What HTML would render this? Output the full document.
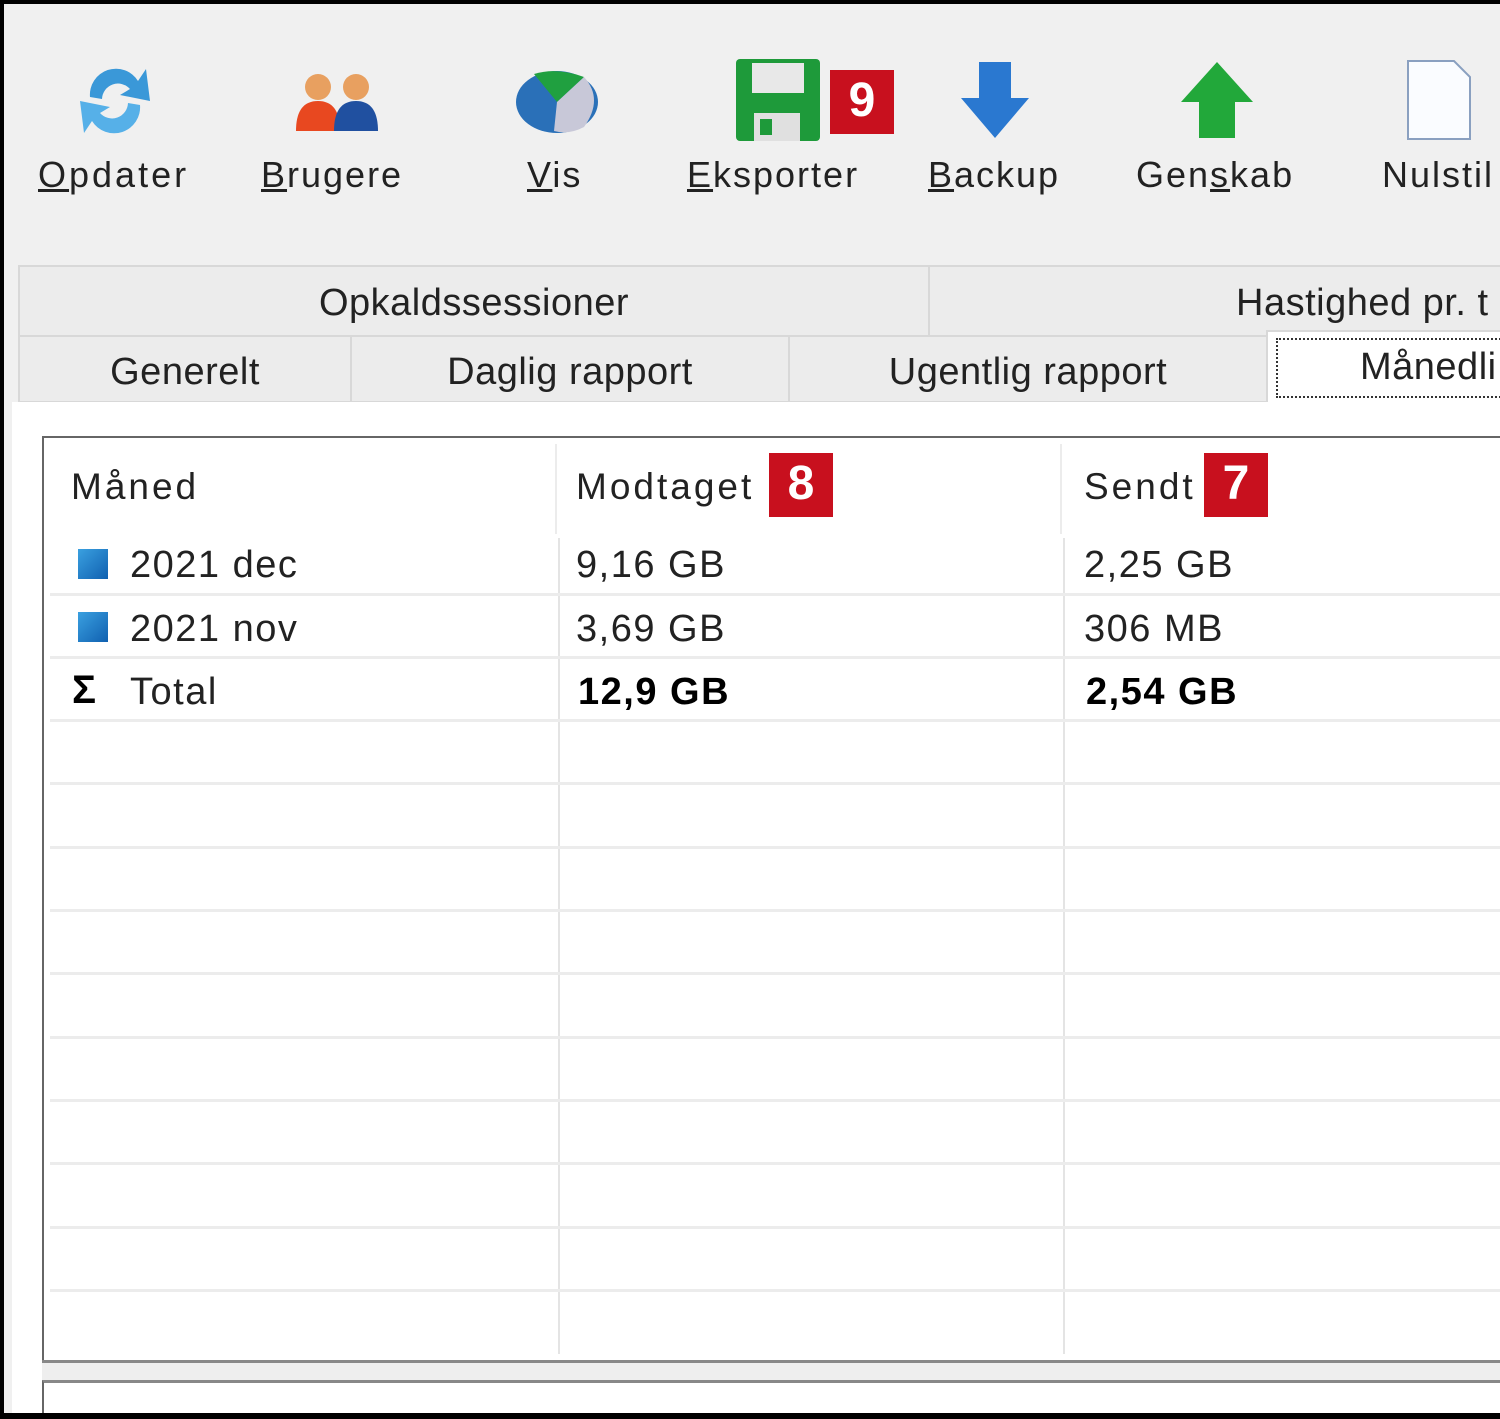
<!DOCTYPE html>
<html><head><style>
*{margin:0;padding:0;box-sizing:border-box}
body{width:1500px;height:1419px;overflow:hidden;background:#000;font-family:"Liberation Sans","DejaVu Sans",sans-serif;position:relative}
#win{position:absolute;left:4px;top:4px;width:1496px;height:1409px;background:#f0f0f0;overflow:hidden}
.lbl{position:absolute;top:150px;font-size:36px;color:#222;letter-spacing:2px}
.ic{position:absolute;top:55px}
.badge{position:absolute;background:#c8101e;color:#fff;font-weight:bold;font-size:48px;text-align:center;line-height:62px}
.tab{position:absolute;background:#ececec;border:2px solid #d8d8d8;font-size:38px;color:#222;text-align:center;letter-spacing:0.5px}
.t{position:absolute;font-size:38px;color:#222;letter-spacing:1.5px}
.h{letter-spacing:3px}
.hl{position:absolute;left:46px;width:1450px;height:3px;background:#ececec}
.vl{position:absolute;width:2px;background:#e4e4e4}
.sq{position:absolute;width:30px;height:30px;background:linear-gradient(135deg,#3aa0e0,#1060b0)}
</style></head><body>
<div id="win">
<svg class="ic" style="left:66px" width="90" height="85" viewBox="0 0 90 85"><path d="M20 38 A26 26 0 0 1 68 22 L76 10 L80 42 L50 36 L60 30 A16 16 0 0 0 32 40Z" fill="#3a98d8"/><path d="M70 46 A26 26 0 0 1 22 62 L14 74 L10 42 L40 48 L30 54 A16 16 0 0 0 58 44Z" fill="#56b0e8"/></svg>
<svg class="ic" style="left:290px;top:65px" width="90" height="65" viewBox="0 0 90 65"><circle cx="24" cy="18" r="13" fill="#e8a060"/><path d="M2 62 Q2 32 24 32 Q46 32 46 62Z" fill="#e84820"/><circle cx="62" cy="18" r="13" fill="#e8a060"/><path d="M40 62 Q40 32 62 32 Q84 32 84 62Z" fill="#2050a0"/></svg>
<svg class="ic" style="left:510px;top:65px" width="86" height="66" viewBox="0 0 86 66"><ellipse cx="43" cy="33" rx="41" ry="31" fill="#2a70b8"/><path d="M43 33 L20 5 Q43 -2 70 8Z" fill="#20a040"/><path d="M43 33 L70 8 Q90 30 70 58 Q55 66 40 62Z" fill="#c8c8d8"/></svg>
<svg class="ic" style="left:732px" width="84" height="82" viewBox="0 0 84 82"><rect x="0" y="0" width="84" height="82" rx="4" fill="#1e9a3a"/><rect x="16" y="4" width="52" height="30" fill="#e8e8e8"/><rect x="18" y="54" width="46" height="28" fill="#e0e0e0"/><rect x="24" y="60" width="12" height="16" fill="#1e9a3a"/></svg>
<div class="badge" style="left:826px;top:66px;width:64px;height:64px">9</div>
<svg class="ic" style="left:955px;top:58px" width="72" height="76" viewBox="0 0 72 76"><path d="M20 0 H52 V36 H70 L36 76 L2 36 H20Z" fill="#2a78d0"/></svg>
<svg class="ic" style="left:1175px;top:58px" width="76" height="76" viewBox="0 0 76 76"><path d="M38 0 L74 40 H56 V76 H20 V40 H2Z" fill="#22a83a"/></svg>
<svg class="ic" style="left:1402px" width="66" height="82" viewBox="0 0 66 82"><path d="M2 2 H48 L64 18 V80 H2Z" fill="#fafcff" stroke="#8aa0c0" stroke-width="2"/></svg>
<div class="lbl" style="left:34px;letter-spacing:3px"><u>O</u>pdater</div>
<div class="lbl" style="left:257px"><u>B</u>rugere</div>
<div class="lbl" style="left:523px"><u>V</u>is</div>
<div class="lbl" style="left:683px"><u>E</u>ksporter</div>
<div class="lbl" style="left:924px"><u>B</u>ackup</div>
<div class="lbl" style="left:1132px">Gen<u>s</u>kab</div>
<div class="lbl" style="left:1378px">Nulstil</div>
<div class="tab" style="left:14px;top:261px;width:912px;height:72px;line-height:72px">Opkaldssessioner</div>
<div class="tab" style="left:924px;top:261px;width:600px;height:72px;line-height:72px;text-align:left;padding-left:306px">Hastighed pr. t</div>
<div class="tab" style="left:14px;top:331px;width:334px;height:68px;line-height:70px">Generelt</div>
<div class="tab" style="left:346px;top:331px;width:440px;height:68px;line-height:70px">Daglig rapport</div>
<div class="tab" style="left:784px;top:331px;width:480px;height:68px;line-height:70px">Ugentlig rapport</div>
<div style="position:absolute;left:1262px;top:326px;width:260px;height:80px;background:#fff;border-left:2px solid #d8d8d8;border-top:2px solid #d8d8d8"></div>
<div style="position:absolute;left:1272px;top:334px;width:240px;height:60px;border:2px dotted #333;font-size:38px;padding-left:82px;line-height:54px;letter-spacing:0.5px;color:#222;white-space:nowrap;overflow:hidden">Månedli</div>
<div style="position:absolute;left:8px;top:398px;width:1500px;height:1020px;background:#fff"></div>
<div style="position:absolute;left:38px;top:432px;width:1470px;height:926px;border:2px solid #666;background:#fff"></div>
<div class="vl" style="left:551px;top:440px;height:90px;background:#ececec"></div>
<div class="vl" style="left:1056px;top:440px;height:90px;background:#ececec"></div>
<div class="vl" style="left:554px;top:534px;height:816px"></div>
<div class="vl" style="left:1059px;top:534px;height:816px"></div>
<div class="t h" style="left:67px;top:462px;font-size:37px">Måned</div>
<div class="t h" style="left:572px;top:462px;font-size:37px">Modtaget</div>
<div class="badge" style="left:765px;top:449px;width:64px;height:64px">8</div>
<div class="t h" style="left:1080px;top:462px;font-size:37px">Sendt</div>
<div class="badge" style="left:1200px;top:449px;width:64px;height:64px">7</div>
<div class="sq" style="left:74px;top:545px"></div>
<div class="t" style="left:126px;top:540px">2021 dec</div>
<div class="t" style="left:572px;top:540px">9,16 GB</div>
<div class="t" style="left:1080px;top:540px">2,25 GB</div>
<div class="sq" style="left:74px;top:608px"></div>
<div class="t" style="left:126px;top:604px">2021 nov</div>
<div class="t" style="left:572px;top:604px">3,69 GB</div>
<div class="t" style="left:1080px;top:604px">306 MB</div>
<div class="t" style="left:68px;top:664px;font-weight:bold;font-size:40px;color:#000">Σ</div>
<div class="t" style="left:126px;top:667px">Total</div>
<div class="t" style="left:574px;top:667px;font-weight:bold;color:#000">12,9 GB</div>
<div class="t" style="left:1082px;top:667px;font-weight:bold;color:#000">2,54 GB</div>
<div class="hl" style="top:589px"></div><div class="hl" style="top:652px"></div><div class="hl" style="top:715px"></div>
<div class="hl" style="top:778px"></div><div class="hl" style="top:842px"></div><div class="hl" style="top:905px"></div>
<div class="hl" style="top:968px"></div><div class="hl" style="top:1032px"></div><div class="hl" style="top:1095px"></div>
<div class="hl" style="top:1158px"></div><div class="hl" style="top:1222px"></div><div class="hl" style="top:1285px"></div>
<div style="position:absolute;left:38px;top:1356px;width:1470px;height:22px;background:#eee;border-top:3px solid #888"></div>
<div style="position:absolute;left:38px;top:1376px;width:1470px;height:60px;background:#fff;border-top:3px solid #888;border-left:2px solid #666"></div>
</div>
</body></html>
